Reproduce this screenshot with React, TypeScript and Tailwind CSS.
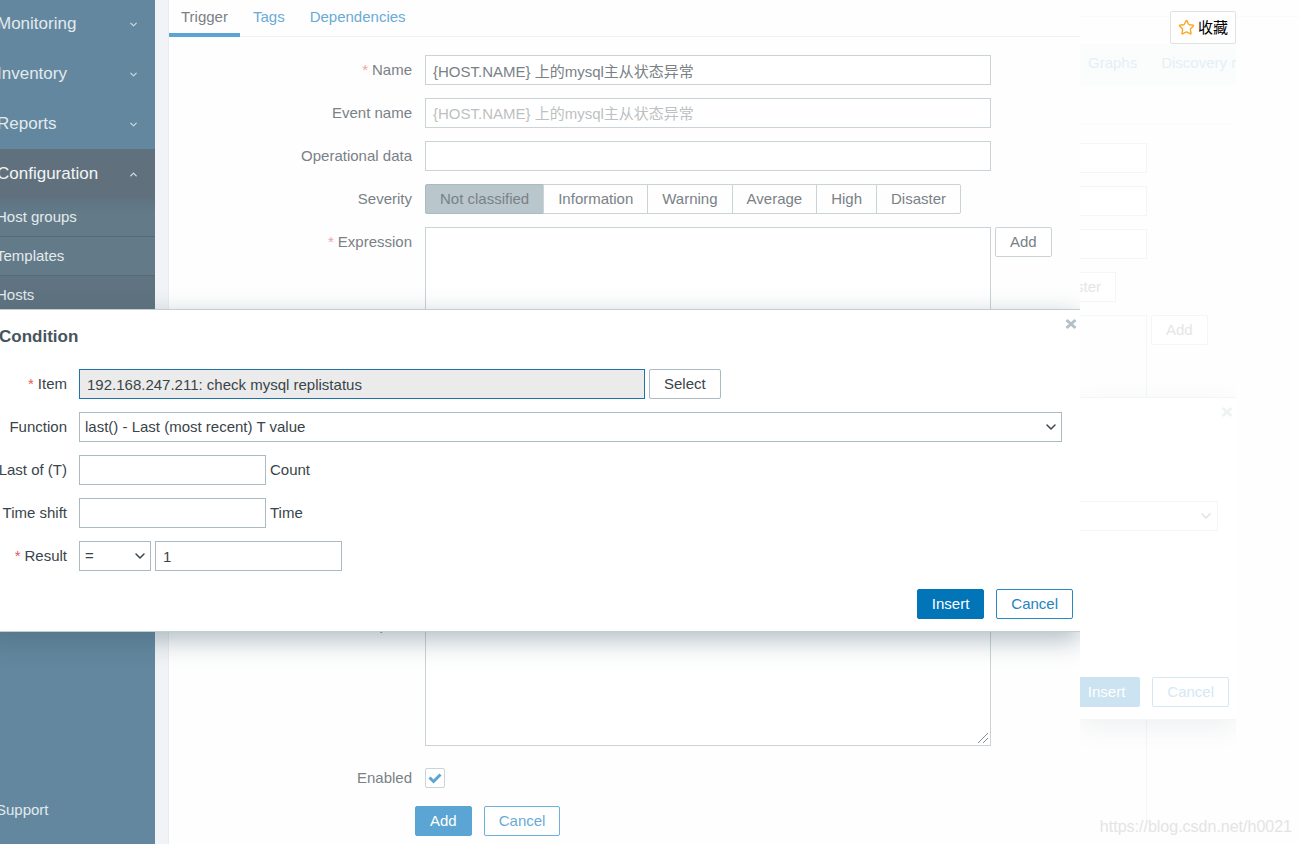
import { useId, type ReactNode } from "react";
import { ChevronDown, ChevronUp, Star } from "lucide-react";
import clsx from "clsx";

const field = "h-[30px] border bg-white px-[7px] text-[15px] outline-none";
const button = "h-[30px] shrink-0 whitespace-nowrap rounded-xs border px-3.5 text-[15px] leading-5";

const severities = ["Not classified", "Information", "Warning", "Average", "High", "Disaster"];

function Sidebar() {
  return (
    <nav className="flex w-[155px] shrink-0 flex-col overflow-hidden bg-[#62879e] text-[#e3eaee]">
      {["Monitoring", "Inventory", "Reports"].map((name) => (
        <a key={name} href="#" className="flex h-[50px] items-center justify-between pr-4 text-[17px] first:h-[49px] first:pb-px">
          <span className="-ml-[3px]">{name}</span>
          <ChevronDown className="size-[11px] opacity-80" strokeWidth={3} />
        </a>
      ))}
      <a href="#" className="flex h-[50px] items-center justify-between bg-[#60717d] pr-4 text-[17px] text-[#f2f5f6]">
        <span className="-ml-[3px]">Configuration</span>
        <ChevronUp className="size-[11px] opacity-80" strokeWidth={3} />
      </a>
      <div className="bg-linear-to-b from-[#5f7482] to-[#637b89] to-15%">
        {["Host groups", "Templates", "Hosts"].map((name) => (
          <a key={name} href="#" className="flex h-[39px] items-center border-b border-[#566a77] text-[15px] first:h-[38px] last:border-b-0 last:bg-[#5f7380]">
            <span className="-ml-1">{name}</span>
          </a>
        ))}
      </div>
      <a href="#" className="mt-auto mb-6 text-[15px] leading-5">
        <span className="-ml-1">Support</span>
      </a>
    </nav>
  );
}

function FormRow({ label, id, required, children }: { label: string; id?: string; required?: boolean; children: ReactNode }) {
  return (
    <div className="grid grid-cols-[243px_minmax(0,1fr)] gap-[13px]">
      <label htmlFor={id} className="text-right leading-[30px]">
        {required && <span className="mr-1 text-[#f0a3a3]">*</span>}
        {label}
      </label>
      <div className="flex items-start gap-1">{children}</div>
    </div>
  );
}

function ResizableArea({ id }: { id: string }) {
  return (
    <span className="relative flex">
      <textarea id={id} className="h-[136px] w-[566px] resize-none border border-[#c9d3d8] bg-white outline-none" />
      <svg viewBox="0 0 12 12" className="pointer-events-none absolute right-0.5 bottom-0.5 size-3" fill="none" stroke="#8d8d8d">
        <path d="M1 11 11 1M6 11 11 6" />
      </svg>
    </span>
  );
}

function TriggerForm() {
  const id = useId();
  return (
    <form className="flex flex-col gap-[13px] pt-[18px]">
      <FormRow label="Name" id={id + "name"} required>
        <input id={id + "name"} defaultValue="{HOST.NAME} 上的mysql主从状态异常" className={clsx(field, "w-[566px] border-[#c9d3d8]")} />
      </FormRow>
      <FormRow label="Event name" id={id + "event"}>
        <input id={id + "event"} placeholder="{HOST.NAME} 上的mysql主从状态异常" className={clsx(field, "w-[566px] border-[#c9d3d8] placeholder:text-[#bdbfc1]")} />
      </FormRow>
      <FormRow label="Operational data" id={id + "data"}>
        <input id={id + "data"} className={clsx(field, "w-[566px] border-[#c9d3d8]")} />
      </FormRow>
      <FormRow label="Severity">
        <div className="flex">
          {severities.map((name) => (
            <button
              key={name}
              type="button"
              className="-ml-px h-[30px] whitespace-nowrap border border-[#c9d3d8] px-3.5 leading-5 first:ml-0 first:rounded-l-xs first:border-[#acbac1] first:bg-[#b9c6cc] last:rounded-r-xs"
            >
              {name}
            </button>
          ))}
        </div>
      </FormRow>
      <FormRow label="Expression" id={id + "expr"} required>
        <textarea id={id + "expr"} className="h-[370px] w-[566px] resize-none border border-[#c9d3d8] bg-white outline-none" />
        <button type="button" className={clsx(button, "border-[#c9d3d8] bg-white")}>Add</button>
      </FormRow>
      <FormRow label="Description" id={id + "desc"}>
        <ResizableArea id={id + "desc"} />
      </FormRow>
      <div className="mt-1">
        <FormRow label="Enabled" id={id + "enabled"}>
          <span className="relative mt-[5px] flex size-5">
            <input id={id + "enabled"} type="checkbox" defaultChecked className="peer size-5 appearance-none rounded-xs border border-[#c9d3d8] bg-white" />
            <svg viewBox="0 0 20 20" className="pointer-events-none absolute inset-0 hidden size-5 peer-checked:block" fill="none" stroke="#5aa5d3" strokeWidth="3">
              <path d="M4.5 9.5 8.5 13.5 15.5 6.5" />
            </svg>
          </span>
        </FormRow>
      </div>
      <div className="flex gap-3 pl-[246px]">
        <button type="button" className={clsx(button, "border-[#5aa5d3] bg-[#5aa5d3] text-white")}>Add</button>
        <button type="button" className={clsx(button, "border-[#6db0d8] bg-white text-[#69abd6]")}>Cancel</button>
      </div>
    </form>
  );
}

function CloseIcon({ className }: { className?: string }) {
  return (
    <svg viewBox="0 0 12 12" className={clsx("size-3", className)} fill="none" stroke="currentColor" strokeWidth="3">
      <path d="M1.5 2 10.5 10M10.5 2 1.5 10" />
    </svg>
  );
}

function DialogRow({ label, id, required, children }: { label: string; id: string; required?: boolean; children: ReactNode }) {
  return (
    <div className="grid grid-cols-[67px_minmax(0,1fr)] gap-3">
      <label htmlFor={id} className="flex justify-end whitespace-nowrap leading-[30px]">
        {required && <span className="mr-1 text-[#e45959]">*</span>}
        {label}
      </label>
      <div className="flex items-center gap-1">{children}</div>
    </div>
  );
}

function Select({ id, className, children }: { id: string; className: string; children: ReactNode }) {
  return (
    <div className={clsx("relative", className)}>
      <select id={id} className="h-[30px] w-full appearance-none border border-[#acbbc2] bg-white px-[5px] outline-none">
        {children}
      </select>
      <ChevronDown className="pointer-events-none absolute top-[7px] right-[3px] size-4" strokeWidth={2.25} />
    </div>
  );
}

function ConditionDialog() {
  const id = useId();
  return (
    <section
      role="dialog"
      aria-label="Condition"
      className="absolute top-[309px] right-0 -left-4 border-y border-[#c3ced3] bg-white pt-[17px] pb-3 pl-4 text-[#3a444a] shadow-[0_8px_24px_0_rgba(60,90,105,0.4)]"
    >
      <button type="button" aria-label="Close" className="absolute top-2 right-[3px] text-[#b3c0c6]">
        <CloseIcon />
      </button>
      <h2 className="-ml-px text-[17px] leading-5 font-bold text-[#46545c]">Condition</h2>
      <form className="mt-[22px]">
        <div className="flex flex-col gap-[13px] pr-[18px]">
          <DialogRow label="Item" id={id + "item"} required>
            <input id={id + "item"} readOnly defaultValue="192.168.247.211: check mysql replistatus" className="h-[30px] w-[566px] border border-[#1f73a8] bg-[#ebebeb] px-[7px] outline-none" />
            <button type="button" className={clsx(button, "border-[#acbbc2] bg-white")}>Select</button>
          </DialogRow>
          <DialogRow label="Function" id={id + "func"}>
            <Select id={id + "func"} className="w-full">
              <option>last() - Last (most recent) T value</option>
            </Select>
          </DialogRow>
          <DialogRow label="Last of (T)" id={id + "last"}>
            <input id={id + "last"} className={clsx(field, "w-[187px] border-[#acbbc2]")} />
            <span>Count</span>
          </DialogRow>
          <DialogRow label="Time shift" id={id + "shift"}>
            <input id={id + "shift"} className={clsx(field, "w-[187px] border-[#acbbc2]")} />
            <span>Time</span>
          </DialogRow>
          <DialogRow label="Result" id={id + "result"} required>
            <Select id={id + "result"} className="w-[72px]">
              <option>=</option>
            </Select>
            <input aria-label="Result value" defaultValue="1" className={clsx(field, "w-[187px] border-[#acbbc2]")} />
          </DialogRow>
        </div>
        <div className="mt-[18px] flex justify-end gap-3 pr-[7px]">
          <button type="button" className={clsx(button, "border-[#0275b8] bg-[#0275b8] text-white")}>Insert</button>
          <button type="button" className={clsx(button, "border-[#2a88c2] bg-white text-[#2583c0]")}>Cancel</button>
        </div>
      </form>
    </section>
  );
}

/* Faded trail of the workspace that continues past its right edge. */
function FadedTrail() {
  const line = "border-[#f3f6f7]";
  return (
    <div inert className="flex min-w-0 flex-col overflow-hidden bg-[#fefefe] text-[15px] text-[#e5e5e7]">
      <div className="h-[17px] border-b border-[#fafafa]" />
      <div className="mt-[27px] flex h-[42px] items-center gap-6 bg-[#fbfdfd] pb-1 pl-2 whitespace-nowrap text-[#e3eff7]">
        <span>Graphs</span>
        <span>Discovery r</span>
      </div>
      <div className="h-[39px] border-b border-[#fafbfb]" />
      <div className="flex flex-col gap-[13px] pt-[18px]">
        {["a", "b", "c"].map((key) => (
          <div key={key} className={clsx("h-[30px] w-[67px] border border-l-0 bg-white", line)} />
        ))}
        <div className={clsx("flex h-[30px] w-9 items-center justify-end overflow-hidden border border-l-0 bg-white pr-3.5", line)}>ster</div>
        <div className="flex gap-1">
          <div className={clsx("h-[82px] w-[67px] border border-l-0 border-b-0", line)} />
          <button type="button" className={clsx(button, "bg-white", line)}>Add</button>
        </div>
      </div>
      <div className={clsx("relative z-10 flex h-[323px] shrink-0 flex-col items-end border-y bg-white shadow-[0_8px_24px_0_rgba(60,90,105,0.08)]", line)}>
        <CloseIcon className="mt-2 mr-[3px] text-[#eff2f3]" />
        <div className={clsx("mt-[83px] mr-[18px] flex h-[30px] items-center justify-end self-stretch border border-l-0 pr-[3px]", line)}>
          <ChevronDown className="size-4 text-[#dfe2e3]" strokeWidth={2.25} />
        </div>
        <div className="mt-auto mb-3 flex gap-3 pr-[7px]">
          <button type="button" className={clsx(button, "border-[#cce3f1] bg-[#cce3f1] text-white")}>Insert</button>
          <button type="button" className={clsx(button, "border-[#d4e7f3] bg-white text-[#d5e7f3]")}>Cancel</button>
        </div>
      </div>
      <div className={clsx("h-[100px] w-[67px] border-r", line)} />
    </div>
  );
}

export default function App() {
  return (
    <div className="relative grid min-h-screen grid-cols-[minmax(0,1fr)_156px_63px] overflow-hidden bg-white font-['Liberation_Sans','Noto_Sans_CJK_SC',sans-serif] text-[15px]">
      <div className="relative flex min-w-0 overflow-hidden text-[#7a8186]">
        <Sidebar />
        <div className="w-3.5 shrink-0 border-r border-[#e9edef] bg-[#f1f3f6]" />
        <main className="min-w-0 flex-1 bg-[#fefefe]">
          <div role="tablist" className="flex h-[37px] gap-px border-b border-[#eff1f2] text-[#69abd6]">
            <button type="button" role="tab" aria-selected="true" className="-mb-px border-b-4 border-[#5aa5d3] px-3 pt-0.5 text-[#7a8186]">
              Trigger
            </button>
            <button type="button" role="tab" className="px-3 pb-px">Tags</button>
            <button type="button" role="tab" className="px-3 pb-px">Dependencies</button>
          </div>
          <TriggerForm />
        </main>
        <ConditionDialog />
      </div>
      <FadedTrail />
      <div className="bg-[#fefefe]">
        <div className="h-[17px] border-b border-[#fafafa]" />
      </div>
      <button type="button" className="absolute top-[11px] right-[63px] z-20 flex h-[33px] items-center gap-[3px] rounded-xs border border-[#e2e2e2] bg-white px-[7px] text-black">
        <Star className="size-[17px] text-[#ffa726]" strokeWidth={2} strokeLinejoin="miter" />
        <span className="pt-0.5">收藏</span>
      </button>
      <span className="absolute right-[7px] bottom-[7px] z-20 text-base leading-5 text-[#e4e4e4]">https://blog.csdn.net/h0021</span>
    </div>
  );
}
